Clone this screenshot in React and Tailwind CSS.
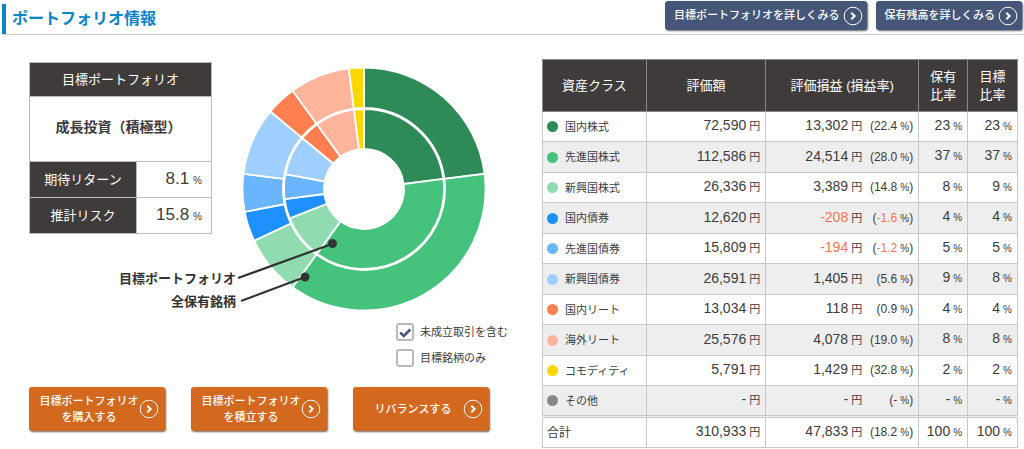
import { useState } from 'react';

const classes = [
  { nom: '国内株式', color: '#2e8b57', value: '72,590', gain: '13,302', rate: '22.4', held: 23, target: 23 },
  { nom: '先進国株式', color: '#45c27c', value: '112,586', gain: '24,514', rate: '28.0', held: 37, target: 37 },
  { nom: '新興国株式', color: '#90dcb0', value: '26,336', gain: '3,389', rate: '14.8', held: 8, target: 9 },
  { nom: '国内債券', color: '#1e90ff', value: '12,620', gain: '-208', rate: '-1.6', held: 4, target: 4 },
  { nom: '先進国債券', color: '#6bb5ff', value: '15,809', gain: '-194', rate: '-1.2', held: 5, target: 5 },
  { nom: '新興国債券', color: '#9fcfff', value: '26,591', gain: '1,405', rate: '5.6', held: 9, target: 8 },
  { nom: '国内リート', color: '#ff7f50', value: '13,034', gain: '118', rate: '0.9', held: 4, target: 4 },
  { nom: '海外リート', color: '#ffb59c', value: '25,576', gain: '4,078', rate: '19.0', held: 8, target: 8 },
  { nom: 'コモディティ', color: '#ffd700', value: '5,791', gain: '1,429', rate: '32.8', held: 2, target: 2 },
  { nom: 'その他', color: '#888888', value: '-', gain: '-', rate: '-', held: 0, target: 0 },
];

function slicePath(start, end, inner, outer) {
  const point = (pct, r) => {
    const a = (pct / 100) * 2 * Math.PI;
    return `${121 + r * Math.sin(a)} ${121 - r * Math.cos(a)}`;
  };
  const large = end - start > 50 ? 1 : 0;
  return `M${point(start, outer)}A${outer} ${outer} 0 ${large} 1 ${point(end, outer)}L${point(end, inner)}A${inner} ${inner} 0 ${large} 0 ${point(start, inner)}Z`;
}

function Ring({ field, inner, outer }) {
  let total = 0;
  return classes.filter((c) => c[field] > 0).map((c) => {
    const start = total;
    total += c[field];
    return (
      <path key={c.nom} d={slicePath(start, total, inner, outer)} fill={c.color} stroke="#fff" strokeWidth="1.8" />
    );
  });
}

function Donut() {
  return (
    <svg viewBox="0 0 242 242" className="w-[242px] h-[242px] shrink-0 overflow-visible" role="img" aria-label="資産配分">
      <Ring field="held" inner={81} outer={121.5} />
      <Ring field="target" inner={40} outer={80} />
      <g stroke="#333" strokeWidth="2.2" fill="#333">
        <path d="M-5 210L89 176M-2 233L62 209" />
        <circle cx="89.5" cy="175.5" r="3.4" />
        <circle cx="62" cy="209" r="3.4" />
      </g>
      <g className="text-[13px] font-bold" fill="#333" textAnchor="end">
        <text x="-7" y="215">目標ポートフォリオ</text>
        <text x="-7" y="238">全保有銘柄</text>
      </g>
    </svg>
  );
}

function Arrow() {
  return (
    <svg viewBox="0 0 20 20" className="w-5 h-5 shrink-0" fill="none" stroke="#fff" aria-hidden="true">
      <circle cx="10" cy="10" r="8.8" strokeWidth="1" />
      <path d="M8.3 6.8L11.6 10L8.3 13.2" strokeWidth="2" />
    </svg>
  );
}

function NavButton({ children }) {
  return (
    <button className="flex items-center gap-[3px] h-[29px] pl-[9px] pr-1 rounded-[3px] bg-[#465678] text-white text-[11px] font-medium shadow-[1px_1px_2px_rgba(0,0,0,0.6)]">
      {children}
      <Arrow />
    </button>
  );
}

function ActionButton({ children }) {
  return (
    <button className="flex items-center flex-1 h-11 pl-2.5 pr-1.5 rounded-[3px] bg-[#d2691e] text-white text-[11px] leading-4 font-medium shadow-[1px_1px_2px_rgba(0,0,0,0.6)]">
      <span className="flex-1 whitespace-nowrap">{children}</span>
      <Arrow />
    </button>
  );
}

function Option({ label, checked, onChange }) {
  return (
    <label className="flex items-center gap-1.5 text-[11px] leading-4">
      <span className="relative w-[18px] h-[18px]">
        <input
          type="checkbox"
          checked={checked}
          onChange={onChange}
          className="block appearance-none w-[18px] h-[18px] border-2 border-[#bbb] rounded-[3px] bg-white"
        />
        {checked && (
          <svg viewBox="0 0 18 18" className="absolute inset-0 pointer-events-none" fill="none" stroke="#465678" strokeWidth="2.6">
            <path d="M4.2 9.5L7.8 13L14.3 6.5" />
          </svg>
        )}
      </span>
      {label}
    </label>
  );
}

function Summary() {
  return (
    <table className="w-[183px] border-collapse text-[13px]">
      <tbody>
        <tr className="h-[34px]">
          <th colSpan={2} className="border border-[#bbb] bg-[#3f3b3a] text-white font-normal">目標ポートフォリオ</th>
        </tr>
        <tr className="h-[65px]">
          <td colSpan={2} className="border border-[#bbb] pr-1 pb-1 text-center text-sm font-bold">成長投資（積極型）</td>
        </tr>
        {[['期待リターン', '8.1'], ['推計リスク', '15.8']].map(([label, value]) => (
          <tr key={label} className="h-9">
            <th className="w-[107px] border border-[#bbb] bg-[#3f3b3a] text-white font-normal">{label}</th>
            <td className="border border-[#bbb] pr-[9px] text-right text-[17px] leading-6">
              {value}<span className="ml-1 text-[10px]">%</span>
            </td>
          </tr>
        ))}
      </tbody>
    </table>
  );
}

function Amount({ children }) {
  return (
    <>
      <span className={/^-\d/.test(children) ? 'text-[#ff7355]' : ''}>{children}</span>
      <span className="ml-[3px] text-[11px]">円</span>
    </>
  );
}

function Percent({ children }) {
  return (
    <>
      {children}
      <span className="ml-[3px] text-[10px]">%</span>
    </>
  );
}

function Cells({ row }) {
  return (
    <>
      <td className="border border-[#c8c8c8] pr-[5px] pb-0.5"><Amount>{row.value}</Amount></td>
      <td className="border border-[#c8c8c8] pr-[5px] pb-0.5">
        <Amount>{row.gain}</Amount>
        <span className="inline-block w-[51px] text-xs leading-4">
          (<span className={/^-\d/.test(row.rate) ? 'text-[#ff7355]' : ''}>{row.rate}</span>
          <span className="ml-[3px] text-[10px]">%</span>)
        </span>
      </td>
      <td className="border border-[#c8c8c8] pr-[5px] pb-0.5"><Percent>{row.held || '-'}</Percent></td>
      <td className="border border-[#c8c8c8] pr-[5px] pb-0.5"><Percent>{row.target || '-'}</Percent></td>
    </>
  );
}

function AssetTable() {
  return (
    <table className="flex-1 table-fixed border-collapse whitespace-nowrap text-sm leading-5">
      <colgroup>
        <col className="w-[21.8%]" />
        <col className="w-[25.2%]" />
        <col className="w-[32.2%]" />
        <col className="w-[10.3%]" />
        <col className="w-[10.5%]" />
      </colgroup>
      <thead>
        <tr className="h-[52px] bg-[#3f3b3a] text-white text-[13px] leading-[18px]">
          <th className="border border-[#888] font-normal">資産クラス</th>
          <th className="border border-[#888] font-normal">評価額</th>
          <th className="border border-[#888] font-normal">評価損益 (損益率)</th>
          <th className="border border-[#888] font-normal">保有<br />比率</th>
          <th className="border border-[#888] font-normal">目標<br />比率</th>
        </tr>
      </thead>
      <tbody>
        {classes.map((row) => (
          <tr key={row.nom} className="h-[30px] even:h-[31px] even:bg-[#eee] text-right">
            <th className="border border-[#c8c8c8] pl-1 text-left text-[11px] font-normal">
              <span className="flex items-center gap-[7px]">
                <span className="w-[11px] h-[11px] rounded-full" style={{ backgroundColor: row.color }} />
                {row.nom}
              </span>
            </th>
            <Cells row={row} />
          </tr>
        ))}
      </tbody>
      <tfoot>
        <tr className="h-[31px] border-t-3 border-double border-[#c8c8c8] text-right">
          <th className="border-x border-b border-solid border-[#c8c8c8] pl-1 text-left text-xs font-normal">合計</th>
          <Cells row={{ value: '310,933', gain: '47,833', rate: '18.2', held: 100, target: 100 }} />
        </tr>
      </tfoot>
    </table>
  );
}

export default function App() {
  const [pending, setPending] = useState(true);
  const [targetOnly, setTargetOnly] = useState(false);

  return (
    <main className="bg-white text-[#3c3c3c] font-['Liberation_Sans','Noto_Sans_CJK_JP',sans-serif]">
      <header className="flex items-start justify-between ml-0.5 pt-px border-b border-[#ccc]">
        <h1 className="mt-[3px] pl-1.5 border-l-4 border-[#0a85c9] text-[#0a85c9] text-base leading-[30px] font-bold">
          ポートフォリオ情報
        </h1>
        <nav className="flex gap-[9px] mr-0.5">
          <NavButton>目標ポートフォリオを詳しくみる</NavButton>
          <NavButton>保有残高を詳しくみる</NavButton>
        </nav>
      </header>
      <div className="flex items-start pt-6 pl-[29px] pr-1.5 gap-[53px]">
        <section className="w-[460px] shrink-0">
          <div className="flex items-start gap-[31px] pt-[3px]">
            <Summary />
            <div className="pt-1.5">
              <Donut />
            </div>
          </div>
          <div className="flex flex-col gap-2 mt-[13px] ml-[367px] whitespace-nowrap">
            <Option label="未成立取引を含む" checked={pending} onChange={() => setPending(!pending)} />
            <Option label="目標銘柄のみ" checked={targetOnly} onChange={() => setTargetOnly(!targetOnly)} />
          </div>
          <div className="flex gap-[26px] mt-5">
            <ActionButton>目標ポートフォリオ<br />を購入する</ActionButton>
            <ActionButton>目標ポートフォリオ<br />を積立する</ActionButton>
            <ActionButton>リバランスする</ActionButton>
          </div>
        </section>
        <AssetTable />
      </div>
    </main>
  );
}
